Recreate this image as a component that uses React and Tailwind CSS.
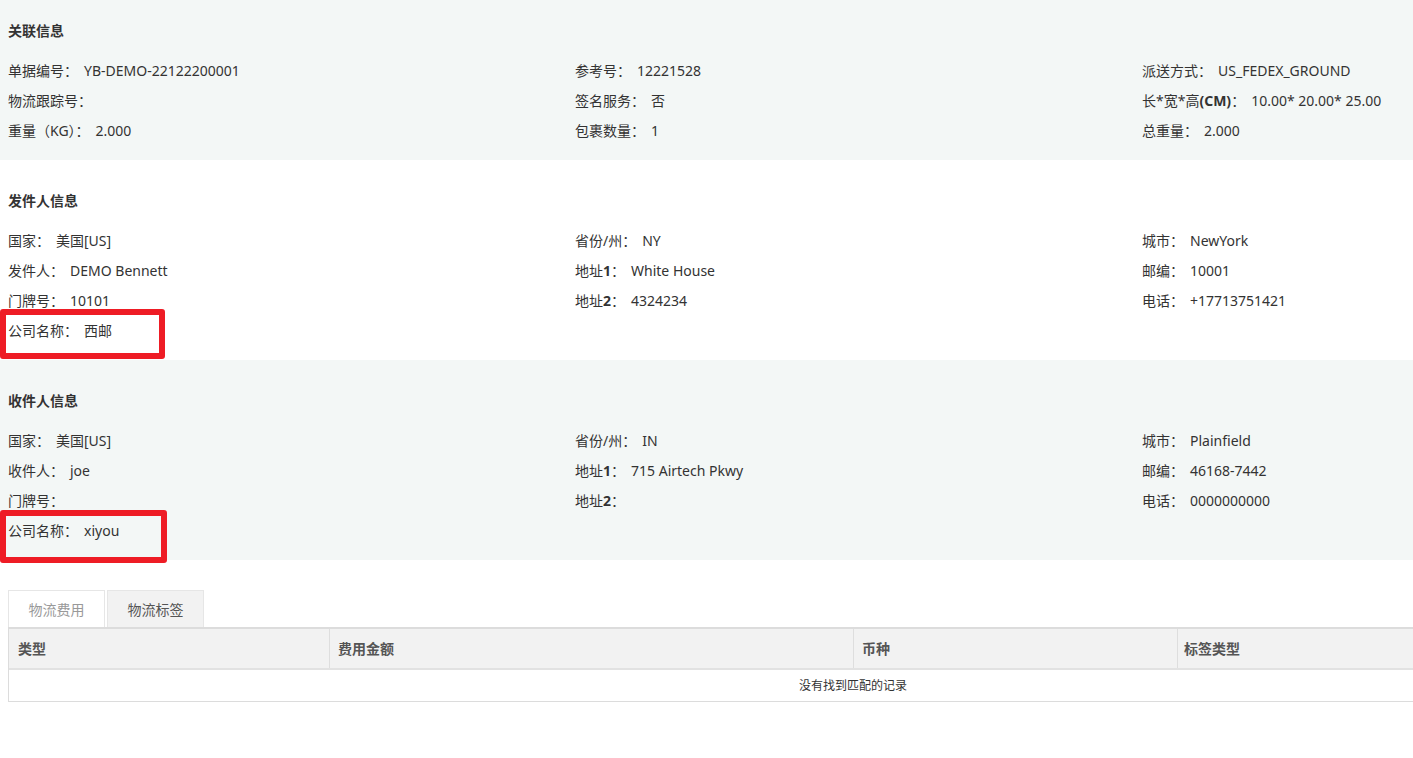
const font = { fontFamily: '"Noto Sans", "Noto Sans CJK SC", sans-serif' };

function Item({ label, value }) {
    return (
        <div className="h-[30px] flex items-center text-[14px] text-[#333] whitespace-nowrap">
            <span>{label}</span>
            <span className="ml-[6px]">{value}</span>
        </div>
    );
}

function Section({ title, cols, bg, first }) {
    return (
        <section className={`${bg} ${first ? "pt-[15px]" : "pt-[25px]"} pb-[15px] px-[8px]`}>
            <div className="h-[30px] flex items-center text-[14px] font-bold text-[#333]">{title}</div>
            <div className="mt-[10px] grid grid-cols-[567px_567px_1fr]">
                {cols.map((col, i) => (
                    <div key={i} className="flex flex-col">
                        {col.map((it, j) => (
                            <Item key={j} label={it[0]} value={it[1]} />
                        ))}
                    </div>
                ))}
            </div>
        </section>
    );
}

export default function App() {
    return (
        <div className="w-[1413px] min-h-[758px] overflow-hidden bg-white relative" style={font}>
            <div className="w-[1710px]">
                <Section
                    first
                    bg="bg-[#f3f7f6]"
                    title="关联信息"
                    cols={[
                        [["单据编号：", "YB-DEMO-22122200001"], ["物流跟踪号：", ""], ["重量（KG）：", "2.000"]],
                        [["参考号：", "12221528"], ["签名服务：", "否"], ["包裹数量：", "1"]],
                        [["派送方式：", "US_FEDEX_GROUND"], [<span>长*宽*高<b>(CM)</b>：</span>, "10.00* 20.00* 25.00"], ["总重量：", "2.000"]],
                    ]}
                />
                <Section
                    bg="bg-white"
                    title="发件人信息"
                    cols={[
                        [["国家：", "美国[US]"], ["发件人：", "DEMO Bennett"], ["门牌号：", "10101"], ["公司名称：", "西邮"]],
                        [["省份/州：", "NY"], [<span>地址<b>1</b>：</span>, "White House"], [<span>地址<b>2</b>：</span>, "4324234"]],
                        [["城市：", "NewYork"], ["邮编：", "10001"], ["电话：", "+17713751421"]],
                    ]}
                />
                <Section
                    bg="bg-[#f3f7f6]"
                    title="收件人信息"
                    cols={[
                        [["国家：", "美国[US]"], ["收件人：", "joe"], ["门牌号：", ""], ["公司名称：", "xiyou"]],
                        [["省份/州：", "IN"], [<span>地址<b>1</b>：</span>, "715 Airtech Pkwy"], [<span>地址<b>2</b>：</span>, ""]],
                        [["城市：", "Plainfield"], ["邮编：", "46168-7442"], ["电话：", "0000000000"]],
                    ]}
                />

                <div className="px-[8px] pt-[30px]">
                    <div className="flex gap-[2px]">
                        <div className="w-[97px] h-[37px] flex items-center justify-center text-[14px] text-[#999] bg-white border border-b-0 border-[#e6e6e6]">物流费用</div>
                        <div className="w-[97px] h-[37px] flex items-center justify-center text-[14px] text-[#555] bg-[#f2f2f2] border border-b-0 border-[#e6e6e6]">物流标签</div>
                    </div>
                    <div className="w-[1690px] border border-[#dcdcdc] border-t-2">
                        <div className="grid grid-cols-[320px_524px_324px_1fr] h-[41px] bg-[#f2f2f2] text-[14px] font-bold text-[#555] border-b-2 border-[#e2e2e2]">
                            <div className="flex items-center pl-[9px]">类型</div>
                            <div className="flex items-center pl-[8px] border-l border-[#dedede]">费用金额</div>
                            <div className="flex items-center pl-[8px] border-l border-[#dedede]">币种</div>
                            <div className="flex items-center pl-[6px] border-l border-[#dedede]">标签类型</div>
                        </div>
                        <div className="h-[31px] flex items-center justify-center text-[12px] text-[#333]">没有找到匹配的记录</div>
                    </div>
                </div>
            </div>

            <div className="absolute left-0 top-[309px] w-[165px] h-[50px] border-[6px] border-[#ee1c25] rounded-[3px]"></div>
            <div className="absolute left-0 top-[510px] w-[167px] h-[53px] border-[6px] border-[#ee1c25] rounded-[3px]"></div>
        </div>
    );
}
